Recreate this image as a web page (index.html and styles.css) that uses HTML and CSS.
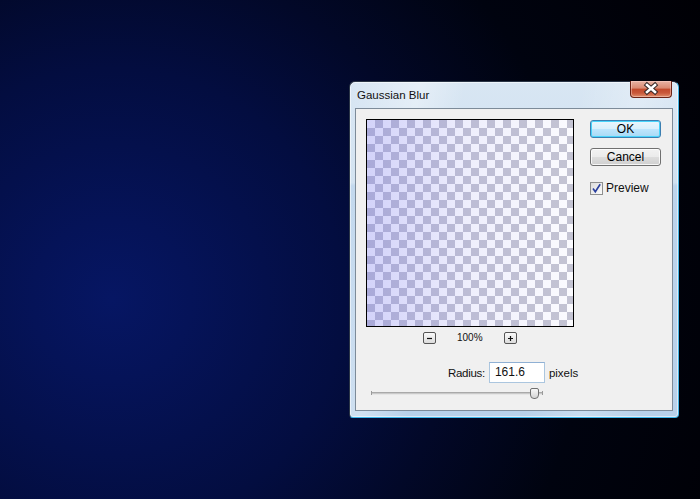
FILE: index.html
```html
<!DOCTYPE html>
<html>
<head>
<meta charset="utf-8">
<title>Gaussian Blur</title>
<link rel="stylesheet" href="styles.css">
</head>
<body>
<div class="desktop">
  <div class="window">
    <div class="titlebar">
      <span class="title">Gaussian Blur</span>
      <div class="close">
        <svg width="42" height="17" viewBox="0 0 42 17">
          <path d="M17 5 L25 12 M25 5 L17 12" stroke="#3a2a28" stroke-width="4.6" stroke-linecap="square" fill="none"/>
          <path d="M17 5 L25 12 M25 5 L17 12" stroke="#ffffff" stroke-width="2.6" stroke-linecap="square" fill="none"/>
        </svg>
      </div>
    </div>
    <div class="client">
      <div class="top-row">
        <div class="preview-col">
          <div class="preview"></div>
          <div class="zoom-row">
            <span class="mini-btn">
              <svg width="13" height="12" viewBox="0 0 13 12"><path d="M4 6.5 H9" stroke="#111" stroke-width="1.2"/></svg>
            </span>
            <span class="zoom-val">100%</span>
            <span class="mini-btn">
              <svg width="13" height="12" viewBox="0 0 13 12"><path d="M4 6.5 H9 M6.5 4 V9" stroke="#111" stroke-width="1.2"/></svg>
            </span>
          </div>
        </div>
        <div class="side-col">
          <button class="btn btn-default">OK</button>
          <button class="btn">Cancel</button>
          <label class="check-row">
            <span class="checkbox">
              <svg width="13" height="13" viewBox="0 0 13 13"><path d="M3 6.5 L5.3 9.8 L10.2 2.2" stroke="#2a3f9e" stroke-width="1.6" fill="none"/></svg>
            </span>
            <span class="check-label">Preview</span>
          </label>
        </div>
      </div>
      <div class="radius-row">
        <span class="radius-label">Radius:</span>
        <span class="input">161.6</span>
        <span class="unit">pixels</span>
      </div>
      <div class="slider">
        <div class="track"></div>
        <div class="thumb"></div>
      </div>
    </div>
  </div>
</div>
</body>
</html>
```

FILE: styles.css
```css
html, body {
  margin: 0;
  padding: 0;
}

body {
  width: 700px;
  height: 499px;
  overflow: hidden;
  font-family: "Liberation Sans", Arial, sans-serif;
}

.desktop {
  position: relative;
  width: 700px;
  height: 499px;
  background: radial-gradient(circle at 16% 60%, #061663 0, #051358 12%, #030d40 35%, #020828 52%, #00030f 72%, #000005 100%);
}

.window {
  position: absolute;
  left: 349px;
  top: 81px;
  width: 318px;
  height: 329px;
  border: 1px solid #2a3546;
  border-right-color: #45b4e4;
  border-bottom-color: #3fb8ec;
  border-radius: 6px 6px 4px 4px;
  background:
    linear-gradient(100deg, rgba(255,255,255,0) 0, rgba(255,255,255,0.35) 18%, rgba(255,255,255,0) 30%, rgba(255,255,255,0) 60%, rgba(255,255,255,0.25) 75%, rgba(255,255,255,0) 90%),
    linear-gradient(to bottom, #d8e6f3 0, #cfe0f0 30%, #bcd4ec 31%, #b8d1ea 100%);
  box-shadow: inset 0 0 0 1px rgba(255,255,255,0.55);
  display: flex;
  flex-direction: column;
  padding: 0 5px 6px 5px;
  box-sizing: content-box;
}

.titlebar {
  position: relative;
  height: 26px;
  display: flex;
  align-items: flex-start;
}

.title {
  font-size: 11.5px;
  color: #111;
  margin-left: 2px;
  margin-top: 6px;
  line-height: 14px;
}

.close {
  position: absolute;
  right: 1px;
  top: -1px;
  width: 42px;
  height: 17px;
  box-sizing: border-box;
  border: 1px solid #6b2416;
  border-top: none;
  border-radius: 0 0 4px 4px;
  background: linear-gradient(to bottom, #e8b3a4 0, #d98a72 45%, #c24a2c 50%, #c9583a 75%, #e08f6c 100%);
  box-shadow: inset 0 0 0 1px rgba(255,220,210,0.45);
  overflow: hidden;
}

.close svg {
  display: block;
  margin: -1px 0 0 -1px;
}

.client {
  width: 316px;
  height: 301px;
  border: 1px solid #7d8b99;
  background: #f0f0f0;
  display: flex;
  flex-direction: column;
}

.top-row {
  display: flex;
  padding: 10px 0 0 10px;
}

.preview-col {
  display: flex;
  flex-direction: column;
  align-items: center;
}

.preview {
  width: 206px;
  height: 206px;
  border: 1px solid #000;
  background:
    linear-gradient(to right, rgba(95,95,235,0.28), rgba(120,120,235,0.12) 50%, rgba(130,130,240,0.03)),
    conic-gradient(#c6c6d2 25%, #ffffff 0 50%, #c6c6d2 0 75%, #ffffff 0) 0 0 / 16px 16px;
}

.zoom-row {
  display: flex;
  align-items: center;
  margin-top: 5px;
  height: 12px;
}

.mini-btn {
  width: 13px;
  height: 12px;
  box-sizing: border-box;
  border: 1px solid #555;
  border-radius: 2px;
  background: linear-gradient(#fafafa, #dcdcdc);
  display: block;
  position: relative;
}

.mini-btn svg {
  position: absolute;
  left: -1px;
  top: -1px;
}

.zoom-val {
  font-size: 10px;
  color: #111;
  width: 25px;
  margin: 0 22px 0 21px;
  line-height: 12px;
  text-align: center;
}

.side-col {
  margin-left: 16px;
  padding-top: 1px;
  display: flex;
  flex-direction: column;
}

.btn {
  width: 71px;
  height: 18px;
  box-sizing: border-box;
  border: 1px solid #707070;
  border-radius: 3px;
  background: linear-gradient(to bottom, #f2f2f2 0, #ebebeb 50%, #dddddd 51%, #cfcfcf 100%);
  box-shadow: inset 0 0 0 1px rgba(255,255,255,0.8);
  font-family: "Liberation Sans", Arial, sans-serif;
  font-size: 12px;
  color: #000;
  padding: 0;
  line-height: 16px;
  margin: 0 0 11px 0;
}

.btn-default {
  border-color: #3c7fb1;
  background: linear-gradient(to bottom, #eaf6fd 0, #d9f0fc 50%, #bee6fd 51%, #a7d9f5 100%);
  box-shadow: inset 0 0 0 1px #48d4fb;
  margin-bottom: 10px;
}

.check-row {
  display: flex;
  align-items: center;
  margin-top: 4px;
}

.checkbox {
  width: 13px;
  height: 13px;
  box-sizing: border-box;
  border: 1px solid #8e8f8f;
  background: linear-gradient(135deg, #dcdcdc, #fbfbfb);
  position: relative;
  display: block;
}

.checkbox svg {
  position: absolute;
  left: -1px;
  top: -1px;
}

.check-label {
  font-size: 12px;
  color: #111;
  margin-left: 3px;
}

.radius-row {
  display: flex;
  align-items: center;
  margin-top: 18px;
  padding-left: 92px;
  font-size: 11.5px;
  color: #111;
}

.radius-label {
  letter-spacing: -0.3px;
}

.input {
  width: 56px;
  height: 21px;
  box-sizing: border-box;
  border: 1px solid #abc6df;
  border-top-color: #8fb0d4;
  background: #fff;
  margin: 0 4px 0 4px;
  padding-left: 5px;
  line-height: 19px;
  font-size: 12px;
}

.slider {
  position: relative;
  margin: 5px 0 0 15px;
  width: 172px;
  height: 12px;
}

.track {
  position: absolute;
  left: 0;
  right: 0;
  top: 4px;
  height: 1px;
  border-top: 1px solid #a9a9a9;
  border-bottom: 1px solid #e6e6e6;
  background: #c9c9c9;
}

.track::before,
.track::after {
  content: "";
  position: absolute;
  top: -2px;
  width: 1px;
  height: 4px;
  background: #9a9a9a;
}

.track::before { left: 0; }
.track::after { right: 0; }

.thumb {
  position: absolute;
  left: 159px;
  top: 0;
  width: 9px;
  height: 11px;
  box-sizing: border-box;
  border: 1px solid #707070;
  border-radius: 2px 2px 4px 4px;
  background: linear-gradient(to bottom, #f7f7f7, #d4d4d4);
}
```
